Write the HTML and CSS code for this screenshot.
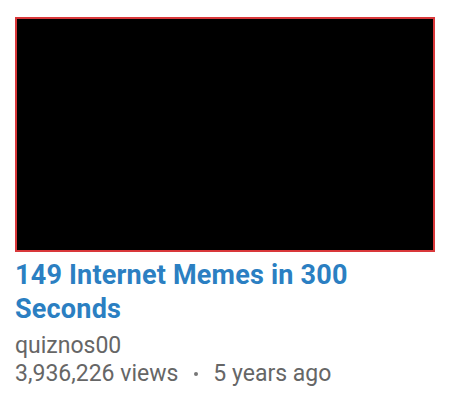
FILE: index.html
```html
<!DOCTYPE html>
<html lang="en">

<head>
    <meta charset="UTF-8">
    <meta name="viewport" content="width=device-width, initial-scale=1.0">
    <title>Video</title>
    <link rel="stylesheet" href="styles.css">
</head>

<body>
    <div class="video-card">
        <div class="thumb"></div>
        <a class="title" href="#">149 Internet Memes in 300 Seconds</a>
        <div class="channel">quiznos00</div>
        <div class="meta">
            <span>3,936,226 views</span>
            <span class="dot"></span>
            <span>5 years ago</span>
        </div>
    </div>
</body>

</html>
```

FILE: styles.css
```css
body {
    font-family: Roboto, "Liberation Sans", Arial, sans-serif;
    margin: 0;
    background: #fff;
}

.video-card {
    padding: 17px 14px 0 15px;
}

.thumb {
    height: 231px;
    background: #000;
    border: 2px solid #d9383a;
}

.title {
    display: block;
    margin-top: 6px;
    font-size: 27px;
    font-weight: 700;
    line-height: 34px;
    letter-spacing: 0.2px;
    color: #2b7fc2;
    text-decoration: none;
}

.channel,
.meta {
    font-size: 23px;
    line-height: 28px;
    color: #666;
}

.channel {
    margin-top: 6px;
}

.meta {
    display: flex;
    align-items: center;
}

.dot {
    width: 4px;
    height: 4px;
    border-radius: 50%;
    background: #777;
    margin: 0 15px 0 16px;
}
```
